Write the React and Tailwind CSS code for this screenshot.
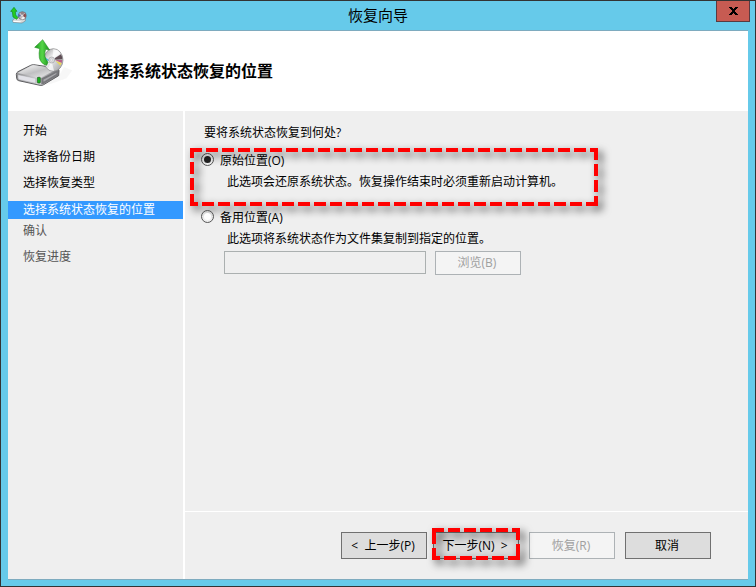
import { useState } from 'react'

const doneSteps = ['开始', '选择备份日期', '选择恢复类型']
const currentStep = '选择系统状态恢复的位置'
const nextSteps = ['确认', '恢复进度']

function RestoreIcon({ className }) {
  return (
    <svg viewBox="45 115 174 150" className={className} aria-hidden="true">
      <defs>
        <linearGradient id="driveTop" x1="0" y1="0" x2="1" y2="1">
          <stop offset="0" stopColor="#ffffff" />
          <stop offset="0.5" stopColor="#c0c0c2" />
          <stop offset="1" stopColor="#f4f4f4" />
        </linearGradient>
        <linearGradient id="driveFront" x1="0" y1="0" x2="1" y2="0">
          <stop offset="0" stopColor="#8f8f91" />
          <stop offset="0.5" stopColor="#d9d9dc" />
          <stop offset="1" stopColor="#707074" />
        </linearGradient>
        <linearGradient id="disc" x1="0" y1="0" x2="1" y2="1">
          <stop offset="0" stopColor="#8c8c8e" />
          <stop offset="0.4" stopColor="#f4f4f4" />
          <stop offset="0.6" stopColor="#d4d4d6" />
          <stop offset="1" stopColor="#98989b" />
        </linearGradient>
        <linearGradient id="arrow" x1="0" y1="0" x2="1" y2="0">
          <stop offset="0" stopColor="#1c9a1c" />
          <stop offset="0.5" stopColor="#55d548" />
          <stop offset="1" stopColor="#189018" />
        </linearGradient>
      </defs>
      <path d="M130 257 L176 230 L192 202 L217 212 L200 236 L150 254 Z" fill="#000" opacity="0.03" />
      <path d="M49 224 Q49 219 54 216 L92 197 Q96 195 101 195 L170 205 Q177 207 177 213 L176 228 L131 255 Q127 258 120 257 L56 243 Q50 241 50 236 Z" fill="url(#driveFront)" stroke="#5f5f62" strokeWidth="3" />
      <path d="M52 220 L94 198 Q97 196 102 197 L173 208 L125 232 Q121 234 116 233 Z" fill="url(#driveTop)" />
      <path d="M124 236 L175 212 L174 226 L131 253 L124 254 Z" fill="#77777b" />
      <path d="M130 240 L170 219 L168 224 L131 246 Z" fill="#a9a9ad" />
      <path d="M54 225 L107 236 L107 251 L58 240 Q54 238 54 235 Z" fill="#e2e2e8" stroke="#929295" strokeWidth="1" />
      <rect x="112" y="233" width="9" height="17" rx="2" fill="#18b41c" stroke="#1c541c" strokeWidth="2" />
      <ellipse cx="160" cy="181" rx="29" ry="34" fill="url(#disc)" stroke="#858587" strokeWidth="2" />
      <path d="M158 179 L160 149 Q174 150 181 162 Z" fill="#fff" opacity="0.7" />
      <path d="M164 176 L183 164 Q187 171 187 179 L166 180 Z" fill="#5e4d54" />
      <path d="M165 181 L187 181 L185 190 Z" fill="#b6608a" />
      <path d="M166 183 L185 190 L181 198 Z" fill="#e9d65c" />
      <path d="M147 180 L133 172 L132 182 L147 184 Z" fill="#47b9d4" />
      <path d="M155 185 L143 207 Q152 214 162 213 Z" fill="#fff" opacity="0.7" />
      <circle cx="155" cy="181" r="9" fill="#dcdcde" stroke="#a0a0a2" strokeWidth="2" />
      <circle cx="155" cy="181" r="3" fill="#fff" stroke="#999" strokeWidth="1" />
      <path d="M128 120 L149 151 L137 149 Q129 171 144 188 L140 197 Q121 191 118 174 Q116 161 119 147 L104 143 Z" fill="url(#arrow)" stroke="#168016" strokeWidth="1.5" />
    </svg>
  )
}

function TitleIcon() {
  return (
    <svg width="18" height="17" viewBox="0 0 54 51" aria-hidden="true">
      <path d="M8 39 L20 30 L46 34 L46 42 L36 48 L9 46 Z" fill="#d8dada" stroke="#7d8a90" strokeWidth="2" />
      <path d="M10 41 L32 43 L32 46 L10 45 Z" fill="#fff" />
      <circle cx="37" cy="26" r="12" fill="#c3bec0" stroke="#5c6168" strokeWidth="2" />
      <path d="M37 26 L30 16 Q37 12 44 16 Z" fill="#8f8187" />
      <path d="M37 26 L46 19 Q50 26 47 32 Z" fill="#8a4a4c" />
      <path d="M37 26 L45 33 Q40 38 34 37 Z" fill="#f4f4f4" />
      <path d="M35 26 L25 20 L25 30 Z" fill="#4963b8" />
      <circle cx="36" cy="26" r="4" fill="#e6dfe4" stroke="#777" strokeWidth="1" />
      <path d="M12 1 L21 13 L16 13 L17 24 L24 32 L20 37 L9 30 L7 14 L2 13 Z" fill="#22cc22" stroke="#168a20" strokeWidth="2" />
    </svg>
  )
}

// Red dashed marker. Each side starts its own dash run, going clockwise.
function Highlight({ width, height, className }) {
  return (
    <svg
      width={width}
      height={height}
      className={`pointer-events-none absolute max-w-none overflow-visible drop-shadow-[4px_4px_4px_rgba(0,0,0,0.7)] ${className}`}
      aria-hidden="true"
    >
      <g stroke="#ff0000" strokeWidth="4" strokeDasharray="12 4">
        <line x1="0" y1="2" x2={width} y2="2" />
        <line x1={width - 2} y1="0" x2={width - 2} y2={height} />
        <line x1={width} y1={height - 2} x2="0" y2={height - 2} />
        <line x1="2" y1={height} x2="2" y2="0" />
      </g>
    </svg>
  )
}

function Option({ value, label, hint, checked, onChange, children }) {
  return (
    <div className="relative">
      <label className="flex w-fit items-start gap-[6px]">
        <input
          type="radio"
          name="location"
          value={value}
          checked={checked}
          onChange={() => onChange(value)}
          className="mt-px size-[13px] appearance-none rounded-full border border-[#555] bg-white bg-clip-content p-[2px] checked:bg-[#222]"
        />
        {label}
      </label>
      <p className="mt-[3px] pl-[26px]">{hint}</p>
      {children}
    </div>
  )
}

function Button({ children, className = '', ...props }) {
  return (
    <button
      type="button"
      className={`w-[86px] whitespace-pre border border-[#707070] bg-[#dddddd] pr-[2px] text-center disabled:border-[#adb2b5] disabled:bg-[#f4f4f4] disabled:text-[#a0a0a0] ${className}`}
      {...props}
    >
      {children}
    </button>
  )
}

export default function App() {
  const [location, setLocation] = useState('original')
  const alternate = location === 'alternate'

  return (
    <div className="flex min-h-screen flex-col border border-[#333] bg-[#66caea] font-['Open_Sans','Noto_Sans_CJK_SC',sans-serif] text-[12px] leading-[18px] text-black">
      <header className="grid h-[29px] grid-cols-[1fr_auto_1fr]">
        <div className="pt-[6px] pl-[9px]">
          <TitleIcon />
        </div>
        <h1 className="text-[15px] leading-[29px]">恢复向导</h1>
        <button
          type="button"
          aria-label="关闭"
          className="mr-[5px] flex h-[21px] w-[34px] items-center justify-center justify-self-end border border-t-0 border-[#5a3a40] bg-[#c75b52]"
        >
          <svg width="9" height="8" viewBox="0 0 9 8" shapeRendering="crispEdges" aria-hidden="true">
            <path d="M0 0h3v1h1v1h1V1h1V0h3v1H8v1H7v1H6v2h1v1h1v1h1v1H6V7H5V6H4v1H3v1H0V7h1V6h1V5h1V3H2V2H1V1H0z" fill="#000" />
          </svg>
        </button>
      </header>

      <main className="mx-[7px] mb-[6px] flex flex-1 flex-col border-y border-[#7eabbf] bg-[#efefef]">
        <div className="flex h-20 bg-white pl-[7px]">
          <RestoreIcon className="mt-[7px] h-[50px] w-[58px]" />
          <h2 className="mt-7 ml-6 text-[16px] leading-6 font-bold">选择系统状态恢复的位置</h2>
        </div>

        <div className="flex flex-1">
          <nav className="w-[175px] pt-[11px]">
            <ul className="flex flex-col gap-2 pl-[15px]">
              {doneSteps.map((s) => <li key={s}>{s}</li>)}
            </ul>
            <p aria-current="step" className="mt-[9px] bg-[#3399ff] pl-[15px] text-white">{currentStep}</p>
            <ul className="mt-[3px] flex flex-col gap-2 pl-[15px] text-[#555]">
              {nextSteps.map((s) => <li key={s}>{s}</li>)}
            </ul>
          </nav>

          <section className="flex flex-1 flex-col border-l-2 border-white">
            <div className="flex-1 pt-[13px] pl-4">
              <p className="pl-[3px]">要将系统状态恢复到何处?</p>
              <div className="mt-[10px] flex flex-col gap-[18px]">
                <Option
                  value="original"
                  label="原始位置(O)"
                  hint="此选项会还原系统状态。恢复操作结束时必须重新启动计算机。"
                  checked={!alternate}
                  onChange={setLocation}
                >
                  <Highlight width={408} height={58} className="-top-1 -left-[11px]" />
                </Option>
                <Option
                  value="alternate"
                  label="备用位置(A)"
                  hint="此选项将系统状态作为文件集复制到指定的位置。"
                  checked={alternate}
                  onChange={setLocation}
                />
              </div>
              <div className="mt-[3px] flex gap-[9px] pl-[23px]">
                <input
                  type="text"
                  aria-label="备用位置"
                  disabled={!alternate}
                  className="h-[23px] w-[202px] border border-[#abb0b0] bg-[#efefef] px-1 outline-none"
                />
                <Button className="h-6" disabled={!alternate}>浏览(B)</Button>
              </div>
            </div>

            <footer className="flex justify-end gap-[10px] border-t border-white py-5 pr-[37px]">
              <div className="flex gap-[6px]">
                <Button className="h-[27px]">{'<  上一步(P)'}</Button>
                <div className="relative">
                  <Button className="h-[27px] border-[#3c7fb1]">{'下一步(N)  >'}</Button>
                  <Highlight width={88} height={32} className="-top-1 -left-px" />
                </div>
              </div>
              <Button className="h-[27px]" disabled>恢复(R)</Button>
              <Button className="h-[27px]">取消</Button>
            </footer>
          </section>
        </div>
      </main>
    </div>
  )
}
